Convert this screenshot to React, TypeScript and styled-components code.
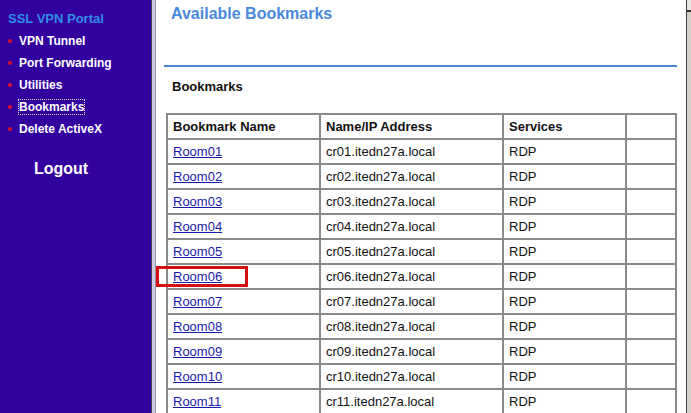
import { createGlobalStyle, styled } from "styled-components";

const rows = Array.from({ length: 11 }, (_, i) => {
  const n = String(i + 1).padStart(2, "0");
  return { name: `Room${n}`, host: `cr${n}.itedn27a.local`, service: "RDP" };
});

const menu = ["VPN Tunnel", "Port Forwarding", "Utilities", "Bookmarks", "Delete ActiveX"];

const App = () => {
  return (
    <>
      <Global />
      <Page>
        <Sidebar>
          <Brand>SSL VPN Portal</Brand>
          <Menu>
            {menu.map((m) => (
              <MenuItem key={m}>
                <Bullet />
                <MenuLabel $focused={m === "Bookmarks"}>{m}</MenuLabel>
              </MenuItem>
            ))}
          </Menu>
          <Logout>Logout</Logout>
        </Sidebar>
        <Divider />
        <Content>
          <Title>Available Bookmarks</Title>
          <Rule />
          <Heading>Bookmarks</Heading>
          <Table>
            <colgroup>
              <col style={{ width: 153 }} />
              <col style={{ width: 183 }} />
              <col style={{ width: 123 }} />
              <col />
            </colgroup>
            <thead>
              <tr>
                <Th>Bookmark Name</Th>
                <Th>Name/IP Address</Th>
                <Th>Services</Th>
                <Th></Th>
              </tr>
            </thead>
            <tbody>
              {rows.map((r) => (
                <tr key={r.name}>
                  <Td>
                    <LinkCell>
                      <Link href="#">{r.name}</Link>
                      {r.name === "Room06" && <Highlight />}
                    </LinkCell>
                  </Td>
                  <Td>{r.host}</Td>
                  <Td>{r.service}</Td>
                  <Td></Td>
                </tr>
              ))}
            </tbody>
          </Table>
        </Content>
        <Scrollbar>
          <ScrollTop />
        </Scrollbar>
      </Page>
    </>
  );
};

const Global = createGlobalStyle`
  html, body { margin: 0; padding: 0; overflow: hidden; background: #fff; }
  body { font-family: "Liberation Sans", Arial, sans-serif; }
`;

const Page = styled.div`
  display: flex;
  width: 691px;
  height: 413px;
  overflow: hidden;
`;

const Sidebar = styled.div`
  width: 151px;
  flex-shrink: 0;
  background: #3300a0;
  padding: 11px 0 0 8px;
  box-sizing: border-box;
`;

const Brand = styled.div`
  color: #2f8ee6;
  font-weight: bold;
  font-size: 13px;
  line-height: 16px;
`;

const Menu = styled.div`
  display: flex;
  flex-direction: column;
  margin-top: 3px;
`;

const MenuItem = styled.div`
  display: flex;
  align-items: center;
  height: 22px;
`;

const Bullet = styled.span`
  width: 4px;
  height: 4px;
  border-radius: 50%;
  background: #d8102c;
  margin-right: 7px;
`;

const MenuLabel = styled.span<{ $focused?: boolean }>`
  color: #fff;
  font-weight: bold;
  font-size: 12px;
  line-height: 14px;
  outline: ${(p) => (p.$focused ? "1px dotted #ddd" : "none")};
`;

const Logout = styled.div`
  color: #fff;
  font-weight: bold;
  font-size: 16px;
  margin: 20px 0 0 26px;
`;

const Divider = styled.div`
  width: 5px;
  flex-shrink: 0;
  border-left: 1px solid #4a4a5a;
  border-right: 1px solid #9890a8;
  background: #d0c8e0;
  box-sizing: border-box;
`;

const Content = styled.div`
  width: 530px;
  flex-shrink: 0;
  padding-left: 8px;
  box-sizing: border-box;
`;

const Title = styled.div`
  color: #4a88dc;
  font-weight: bold;
  font-size: 16px;
  line-height: 20px;
  padding: 4px 0 0 7px;
`;

const Rule = styled.div`
  width: 513px;
  height: 2px;
  background: #4a88d0;
  margin-top: 41px;
`;

const Heading = styled.div`
  font-weight: bold;
  font-size: 13px;
  line-height: 16px;
  color: #111;
  margin: 12px 0 0 8px;
`;

const Table = styled.table`
  margin: 18px 0 0 2px;
  width: 511px;
  border-collapse: separate;
  border-spacing: 0;
  table-layout: fixed;
  border-top: 2px solid #8a8a8a;
  border-left: 2px solid #8a8a8a;
`;

const Th = styled.th`
  text-align: left;
  font-weight: bold;
  font-size: 13px;
  color: #111;
  height: 23px;
  padding: 0 0 0 5px;
  border-right: 2px solid #8a8a8a;
  border-bottom: 2px solid #8a8a8a;
`;

const Td = styled.td`
  font-size: 13px;
  color: #111;
  height: 23px;
  padding: 0 0 0 5px;
  border-right: 2px solid #8a8a8a;
  border-bottom: 2px solid #8a8a8a;
  white-space: nowrap;
`;

const LinkCell = styled.div`
  position: relative;
`;

const Link = styled.a`
  color: #1a1aa8;
  text-decoration: underline;
`;

const Highlight = styled.span`
  position: absolute;
  left: -17px;
  top: -3px;
  width: 92px;
  height: 21px;
  border: 3px solid #d41010;
  box-sizing: border-box;
`;

const Scrollbar = styled.div`
  flex: 1;
  border-left: 1px solid #404040;
  background: #d4d0c8;
`;

const ScrollTop = styled.div`
  height: 10px;
  border-bottom: 2px solid #303030;
  background: #e8e6e0;
`;

export default App;
